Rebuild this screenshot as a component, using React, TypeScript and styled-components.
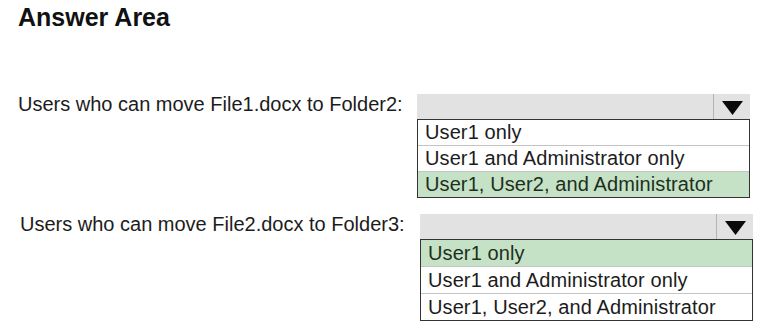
import * as React from 'react';
import styled, { createGlobalStyle } from 'styled-components';

const GlobalStyle = createGlobalStyle`
  html, body {
    margin: 0;
    padding: 0;
    background: #fff;
  }
  body {
    font-family: 'Liberation Sans', Arial, sans-serif;
    color: #1c1c1c;
  }
`;

const Page = styled.main`
  width: 764px;
  height: 333px;
  overflow: hidden;
  padding: 2px 0 0 0;
  box-sizing: border-box;
`;

const Title = styled.h1`
  margin: 0 0 0 18px;
  font-size: 25px;
  line-height: 30px;
  font-weight: 700;
  color: #111;
`;

const Questions = styled.section`
  display: flex;
  flex-direction: column;
  gap: 16px;
  margin-top: 62px;
`;

const Question = styled.div<{ $indent: number }>`
  display: flex;
  align-items: flex-start;
  padding-left: ${p => p.$indent}px;
`;

const Label = styled.span<{ $width: number }>`
  width: ${p => p.$width}px;
  font-size: 20px;
  line-height: 21px;
  white-space: nowrap;
  color: #1c1c1c;
`;

const Dropdown = styled.div`
  width: 333px;
  display: flex;
  flex-direction: column;
`;

const Header = styled.div`
  height: 25px;
  display: flex;
  background: #e2e2e2;
`;

const HeaderField = styled.div`
  flex: 1;
  border-right: 1px solid #b4b4b4;
`;

const ArrowCell = styled.div`
  width: 36px;
  display: flex;
  align-items: center;
  justify-content: center;
  padding-top: 3px;
  box-sizing: border-box;
`;

const List = styled.ul`
  margin: 0;
  padding: 0;
  list-style: none;
  border: 1px solid #333;
`;

const Option = styled.li<{ $selected?: boolean; $height: number }>`
  height: ${p => p.$height}px;
  display: flex;
  align-items: center;
  padding-left: 7px;
  font-size: 20px;
  letter-spacing: 0.1px;
  color: ${p => (p.$selected ? '#1d2f1d' : '#1c1c1c')};
  background: ${p => (p.$selected ? '#c6e2c6' : '#fff')};
  & + & {
    border-top: 1px solid #c4c4c4;
  }
`;

const Arrow = () => (
  <svg width="21" height="14" viewBox="0 0 21 14">
    <polygon points="0,0 21,0 10.5,14" fill="#0a0a0a" />
  </svg>
);

const options = [
  'User1 only',
  'User1 and Administrator only',
  'User1, User2, and Administrator',
];

type QuestionProps = {
  label: string,
  selected: number,
  indent: number,
  labelWidth: number,
  rowHeight: number,
};

const AnswerQuestion = ({ label, selected, indent, labelWidth, rowHeight }: QuestionProps) => (
  <Question $indent={indent}>
    <Label $width={labelWidth}>{label}</Label>
    <Dropdown>
      <Header>
        <HeaderField />
        <ArrowCell>
          <Arrow />
        </ArrowCell>
      </Header>
      <List>
        {options.map((o, i) => (
          <Option key={o} $selected={i === selected} $height={rowHeight}>
            {o}
          </Option>
        ))}
      </List>
    </Dropdown>
  </Question>
);

const App = () => (
  <>
    <GlobalStyle />
    <Page>
      <Title>Answer Area</Title>
      <Questions>
        <AnswerQuestion
          label="Users who can move File1.docx to Folder2:"
          selected={2}
          indent={18}
          labelWidth={399}
          rowHeight={25}
        />
        <AnswerQuestion
          label="Users who can move File2.docx to Folder3:"
          selected={0}
          indent={20}
          labelWidth={400}
          rowHeight={26}
        />
      </Questions>
    </Page>
  </>
);

export default App;
